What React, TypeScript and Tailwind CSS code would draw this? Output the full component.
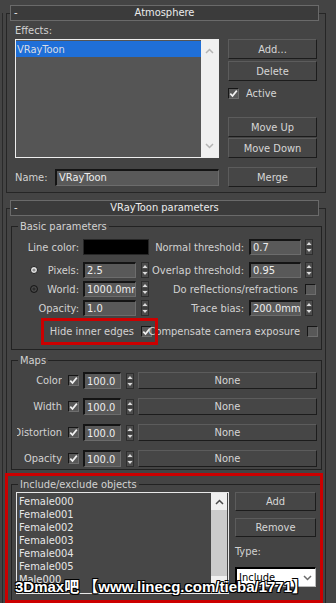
import React from 'react';

const Spinner = () => (
  <svg width="8" height="16" viewBox="0 0 8 16" className="shrink-0">
    <rect x="0.5" y="0.5" width="7" height="15" fill="#4c4c4c" stroke="#2e2e2e" />
    <line x1="1" y1="8" x2="7" y2="8" stroke="#2e2e2e" />
    <path d="M1.5 6 L4 3 L6.5 6 Z" fill="#dcdcdc" />
    <path d="M1.5 10 L4 13 L6.5 10 Z" fill="#dcdcdc" />
  </svg>
);

const Field = ({ value, w, h = 'h-[16px]' }: { value: string; w: string; h?: string }) => (
  <div
    className={`${w} ${h} shrink-0 bg-[#595959] border-t-2 border-l-2 border-b border-r border-t-[#141414] border-l-[#141414] border-b-[#6c6c6c] border-r-[#6c6c6c] pl-[2px] flex items-center text-[#ededed] overflow-hidden whitespace-nowrap`}
  >
    {value}
  </div>
);

const Check = ({ checked = false }: { checked?: boolean }) => (
  <div className="w-[11px] h-[11px] shrink-0 bg-[#585858] border border-t-[#161616] border-l-[#161616] border-b-[#6e6e6e] border-r-[#6e6e6e] flex items-center justify-center">
    {checked && (
      <svg width="9" height="9" viewBox="0 0 9 9">
        <path d="M1.3 4.6 L3.5 7 L7.8 1.6" fill="none" stroke="#f2f2f2" strokeWidth="1.7" />
      </svg>
    )}
  </div>
);

const Radio = ({ on = false }: { on?: boolean }) => (
  <svg width="8" height="8" viewBox="0 0 8 8" className="shrink-0">
    <circle cx="4" cy="4" r="3.5" fill={on ? '#e8e8e8' : '#2c2c2c'} stroke="#1a1a1a" />
    {on && <circle cx="4" cy="4" r="1.6" fill="#8a8a8a" />}
    {!on && <circle cx="4" cy="4" r="2.2" fill="none" stroke="#5a5a5a" strokeWidth="0.8" />}
  </svg>
);

const Btn = ({ label, className = '' }: { label: string; className?: string }) => (
  <div
    className={`flex items-center justify-center bg-[#464646] border border-t-[#5c5c5c] border-l-[#5c5c5c] border-b-[#1c1c1c] border-r-[#1c1c1c] text-[#d6d6d6] ${className}`}
  >
    {label}
  </div>
);

const Label = ({ text, w, className = '' }: { text: string; w: string; className?: string }) => (
  <div className={`${w} shrink-0 flex justify-end whitespace-nowrap text-[#d2d2d2] ${className}`}>{text}</div>
);

const Rollout = ({ title, className = '', children }: { title: string; className?: string; children: React.ReactNode }) => (
  <div className={`w-[320px] border border-[#262626] ${className}`}>
    <div className="-mt-[9px] ml-[3px] mr-[6px] h-[16px] bg-[#3b3b3b] border border-[#6a6a6a] grid grid-cols-[16px_1fr_16px] items-center text-[#ececec]">
      <span className="pl-[3px] leading-[12px]">-</span>
      <span className="text-center leading-[12px]">{title}</span>
      <span />
    </div>
    {children}
  </div>
);

const Group = ({ title, className = '', children }: { title: string; className?: string; children: React.ReactNode }) => (
  <div className={`border border-[#222222] ${className}`}>
    <div className="-mt-[7px] ml-[6px] w-fit px-[2px] h-[13px] leading-[13px] bg-[#444444] text-[#d2d2d2]">{title}</div>
    {children}
  </div>
);

const ChevUp = ({ color }: { color: string }) => (
  <svg width="9" height="6" viewBox="0 0 9 6">
    <path d="M1 5 L4.5 1.5 L8 5" fill="none" stroke={color} strokeWidth="1.5" />
  </svg>
);

const ChevDown = ({ color }: { color: string }) => (
  <svg width="9" height="6" viewBox="0 0 9 6">
    <path d="M1 1 L4.5 4.5 L8 1" fill="none" stroke={color} strokeWidth="1.5" />
  </svg>
);

const MapRow = ({ name, className = '' }: { name: string; className?: string }) => (
  <div className={`flex items-center h-[17px] ${className}`}>
    <Label text={name} w="w-[45px]" className="ml-[5px] overflow-hidden" />
    <div className="ml-[6px]">
      <Check checked />
    </div>
    <div className="ml-[4px]">
      <Field value="100.0" w="w-[38px]" h="h-[17px]" />
    </div>
    <div className="ml-[5px]">
      <Spinner />
    </div>
    <Btn label="None" className="ml-[4px] w-[179px] h-[17px]" />
  </div>
);

export default function App() {
  const objects = ['Female000', 'Female001', 'Female002', 'Female003', 'Female004', 'Female005', 'Male000', 'Male001'];

  return (
    <div className="relative w-[336px] h-[603px] overflow-hidden bg-[#444444] pl-[2px] text-[11px] leading-[13px] font-['DejaVu_Sans_Condensed','DejaVu_Sans','Liberation_Sans',sans-serif]">
      <div className="h-full border-l border-[#2a2a2a] pl-[3px]">
        {/* Atmosphere */}
        <Rollout title="Atmosphere" className="mt-[13px]">
          <div className="pt-[3px] pl-[8px] pb-[5px]">
            <div className="flex">
              <div className="w-[204px]">
                <div className="h-[13px] text-[#d2d2d2]">Effects:</div>
                <div className="mt-[2px] h-[119px] border border-[#eeeeee] bg-[#555555] flex">
                  <div className="flex-1">
                    <div className="mt-[1px] h-[16px] bg-[#1f6fd8] text-[#d8dde6] pl-[1px] flex items-center">VRayToon</div>
                  </div>
                  <div className="w-[17px] bg-[#f0f0f0] flex flex-col items-center justify-between py-[8px]">
                    <ChevUp color="#b4b4b4" />
                    <ChevDown color="#b4b4b4" />
                  </div>
                </div>
              </div>
              <div className="ml-[9px] w-[89px] pt-[15px]">
                <Btn label="Add..." className="h-[20px]" />
                <Btn label="Delete" className="h-[20px] mt-[2px]" />
                <div className="mt-[5px] h-[14px] flex items-center">
                  <Check checked />
                  <span className="ml-[7px] text-[#d6d6d6]">Active</span>
                </div>
                <Btn label="Move Up" className="h-[20px] mt-[17px]" />
                <Btn label="Move Down" className="h-[20px] mt-[1px]" />
              </div>
            </div>
            <div className="mt-[9px] flex items-center">
              <div className="w-[40px] text-[#d2d2d2]">Name:</div>
              <Field value="VRayToon" w="w-[164px]" h="h-[17px]" />
              <Btn label="Merge" className="ml-[9px] w-[89px] h-[20px]" />
            </div>
          </div>
        </Rollout>

        {/* VRayToon parameters */}
        <Rollout title="VRayToon parameters" className="mt-[15px] h-[420px]">
          <Group title="Basic parameters" className="ml-[4px] mr-[3px] mt-[10px] pb-[10px]">
            <div className="mt-[6px] h-[16px] flex items-center">
              <Label text="Line color:" w="w-[67px]" />
              <div className="ml-[4px] w-[66px] h-[16px] bg-black border border-[#262626]" />
              <Label text="Normal threshold:" w="w-[95px]" />
              <div className="ml-[5px]">
                <Field value="0.7" w="w-[52px]" />
              </div>
              <div className="ml-[4px]">
                <Spinner />
              </div>
            </div>
            <div className="mt-[7px] h-[16px] flex items-center">
              <div className="w-[67px] shrink-0 flex items-center pl-[18px]">
                <Radio on />
                <div className="flex-1 flex justify-end text-[#d2d2d2]">Pixels:</div>
              </div>
              <div className="ml-[4px]">
                <Field value="2.5" w="w-[53px]" />
              </div>
              <div className="ml-[5px]">
                <Spinner />
              </div>
              <Label text="Overlap threshold:" w="w-[95px]" />
              <div className="ml-[5px]">
                <Field value="0.95" w="w-[52px]" />
              </div>
              <div className="ml-[4px]">
                <Spinner />
              </div>
            </div>
            <div className="mt-[3px] h-[16px] flex items-center">
              <div className="w-[67px] shrink-0 flex items-center pl-[18px]">
                <Radio />
                <div className="flex-1 flex justify-end text-[#d2d2d2]">World:</div>
              </div>
              <div className="ml-[4px]">
                <Field value="1000.0mm" w="w-[53px]" />
              </div>
              <div className="ml-[5px]">
                <Spinner />
              </div>
              <Label text="Do reflections/refractions" w="w-[149px]" />
              <div className="ml-[7px]">
                <Check />
              </div>
            </div>
            <div className="mt-[3px] h-[16px] flex items-center">
              <Label text="Opacity:" w="w-[67px]" />
              <div className="ml-[4px]">
                <Field value="1.0" w="w-[53px]" />
              </div>
              <div className="ml-[5px]">
                <Spinner />
              </div>
              <Label text="Trace bias:" w="w-[95px]" />
              <div className="ml-[5px]">
                <Field value="200.0mm" w="w-[52px]" />
              </div>
              <div className="ml-[4px]">
                <Spinner />
              </div>
            </div>
            <div className="mt-[7px] h-[16px] flex items-center">
              <Label text="Hide inner edges" w="w-[122px]" />
              <div className="ml-[7px]">
                <Check checked />
              </div>
              <Label text="Compensate camera exposure" w="w-[147px]" className="ml-[1px]" />
              <div className="ml-[7px]">
                <Check />
              </div>
            </div>
          </Group>

          <Group title="Maps" className="ml-[4px] mr-[3px] mt-[10px] pb-[2px]">
            <MapRow name="Color" className="mt-[5px]" />
            <MapRow name="Width" className="mt-[9px]" />
            <MapRow name="Distortion" className="mt-[9px]" />
            <MapRow name="Opacity" className="mt-[9px]" />
          </Group>

          <Group title="Include/exclude objects" className="ml-[4px] mr-[3px] mt-[14px] h-[140px]">
            <div className="mt-[1px] flex">
              <div className="ml-[4px] w-[213px] h-[102px] border border-[#e8e8e8] bg-[#474747] flex overflow-hidden">
                <div className="flex-1 pt-[2px] pl-[2px] text-[#e6e6e6]">
                  {objects.map((o) => (
                    <div key={o} className="h-[13px] leading-[13px]">
                      {o}
                    </div>
                  ))}
                </div>
                <div className="w-[16px] mr-[1px] bg-[#cbcbcb] flex flex-col justify-between">
                  <div className="h-[17px] bg-[#f0f0f0] flex items-center justify-center">
                    <ChevUp color="#4a4a4a" />
                  </div>
                  <div className="h-[17px] bg-[#f0f0f0] flex items-center justify-center">
                    <ChevDown color="#8a8a8a" />
                  </div>
                </div>
              </div>
              <div className="ml-[6px] w-[81px]">
                <Btn label="Add" className="h-[19px]" />
                <Btn label="Remove" className="h-[19px] mt-[7px]" />
                <div className="mt-[8px] h-[13px] text-[#d2d2d2]">Type:</div>
                <div className="mt-[9px] h-[20px] bg-white border-t-2 border-l-2 border-b border-r border-t-black border-l-black border-b-[#bbbbbb] border-r-[#bbbbbb] flex items-center justify-between pl-[2px] pr-[3px] text-black">
                  <span>Include</span>
                  <ChevDown color="#6a6a6a" />
                </div>
              </div>
            </div>
          </Group>
        </Rollout>
      </div>

      {/* red annotation boxes */}
      <div className="absolute left-[41px] top-[318px] w-[117px] h-[27px] border-[3px] border-[#cc0000]" />
      <div className="absolute left-[5px] top-[473px] w-[318px] h-[130px] border-[3px] border-[#cc0000]" />

      {/* watermark */}
      <div className="absolute left-[15px] top-[579px] text-[15px] leading-[16px] font-bold text-white whitespace-nowrap font-['Liberation_Sans','Noto_Sans_CJK_SC',sans-serif] [text-shadow:1px_1px_0_#000,-1px_-1px_0_#000,1px_-1px_0_#000,-1px_1px_0_#000,0_1px_0_#000,0_-1px_0_#000]">
        3Dmax吧 【www.linecg.com/tieba/1771】
      </div>
    </div>
  );
}
